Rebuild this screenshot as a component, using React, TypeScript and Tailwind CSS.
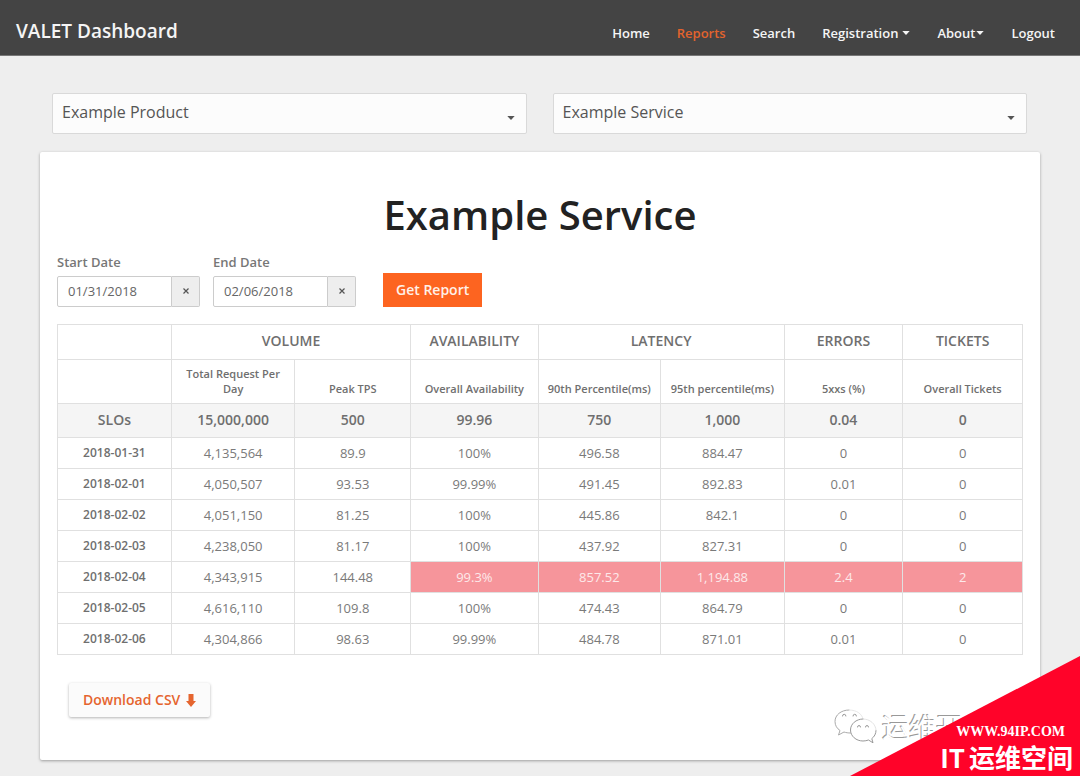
import { useState } from "react";

type NavItem = { label: string; active?: boolean; caret?: "tight" | "wide" };

type ReportRow = {
  date: string;
  values: string[];
  // index of the first value that misses its SLO
  missFrom?: number;
};

const NAV: NavItem[] = [
  { label: "Home" },
  { label: "Reports", active: true },
  { label: "Search" },
  { label: "Registration", caret: "wide" },
  { label: "About", caret: "tight" },
  { label: "Logout" },
];

const GROUPS = [
  { label: "VOLUME", span: 2 },
  { label: "AVAILABILITY", span: 1 },
  { label: "LATENCY", span: 2 },
  { label: "ERRORS", span: 1 },
  { label: "TICKETS", span: 1 },
];

const COLUMNS = [
  "Total Request Per Day",
  "Peak TPS",
  "Overall Availability",
  "90th Percentile(ms)",
  "95th percentile(ms)",
  "5xxs (%)",
  "Overall Tickets",
];

const SLOS = ["15,000,000", "500", "99.96", "750", "1,000", "0.04", "0"];

const ROWS: ReportRow[] = [
  { date: "2018-01-31", values: ["4,135,564", "89.9", "100%", "496.58", "884.47", "0", "0"] },
  { date: "2018-02-01", values: ["4,050,507", "93.53", "99.99%", "491.45", "892.83", "0.01", "0"] },
  { date: "2018-02-02", values: ["4,051,150", "81.25", "100%", "445.86", "842.1", "0", "0"] },
  { date: "2018-02-03", values: ["4,238,050", "81.17", "100%", "437.92", "827.31", "0", "0"] },
  { date: "2018-02-04", values: ["4,343,915", "144.48", "99.3%", "857.52", "1,194.88", "2.4", "2"], missFrom: 2 },
  { date: "2018-02-05", values: ["4,616,110", "109.8", "100%", "474.43", "864.79", "0", "0"] },
  { date: "2018-02-06", values: ["4,304,866", "98.63", "99.99%", "484.78", "871.01", "0.01", "0"] },
];

function Caret({ className }: { className?: string }) {
  return (
    <svg viewBox="0 0 8 4" className={`w-2 h-1 ${className ?? ""}`} fill="currentColor" aria-hidden="true">
      <path d="M.3 0h7.400L4 4z" />
    </svg>
  );
}

function Picker({ label, option }: { label: string; option: string }) {
  return (
    <div className="relative">
      <select
        aria-label={label}
        className="appearance-none block w-full h-[41px] px-[9px] pb-1 rounded-[2px] border border-[#d9d9d9] bg-[#fcfcfc] text-base text-[#555] focus:outline-none"
      >
        <option>{option}</option>
      </select>
      <Caret className="absolute right-3 top-[23px] text-[#555] pointer-events-none" />
    </div>
  );
}

function DateField({ id, label, initial }: { id: string; label: string; initial: string }) {
  const [value, setValue] = useState(initial);

  return (
    <div>
      <label htmlFor={id} className="block text-[13px] leading-5 font-semibold text-[#777]">{label}</label>
      <div className="flex mt-1 h-[31px]">
        <input
          id={id}
          type="text"
          value={value}
          onChange={(e) => setValue(e.target.value)}
          className="w-[115px] px-[10px] border border-[#ccc] rounded-l-[2px] bg-white text-[13px] text-[#666] focus:outline-none"
        />
        <button
          type="button"
          aria-label={`Clear ${label}`}
          onClick={() => setValue("")}
          className="w-7 pb-[2px] flex items-center justify-center border border-l-0 border-[#ccc] rounded-r-[2px] bg-[#eee] text-[#555]"
        >
          <svg viewBox="0 0 6 6" className="size-[6px]" fill="none" stroke="currentColor" strokeWidth="1.2" aria-hidden="true">
            <path d="M.5.5l5 5M5.500.5l-5 5" />
          </svg>
        </button>
      </div>
    </div>
  );
}

function ReportTable() {
  return (
    <table className="w-full mt-[17px] table-fixed border-collapse text-center text-[#6f6f6f] [&_td]:border [&_th]:border [&_td]:border-[#e0e0e0] [&_th]:border-[#e0e0e0]">
      <colgroup>
        <col className="w-[11.8%]" />
        <col className="w-[12.8%]" />
        <col className="w-[12%]" />
        <col className="w-[13.2%]" />
        <col className="w-[12.7%]" />
        <col className="w-[12.8%]" />
        <col className="w-[12.3%]" />
        <col className="w-[12.4%]" />
      </colgroup>
      <thead>
        <tr className="h-[35px] text-sm">
          <td />
          {GROUPS.map((g) => (
            <th key={g.label} colSpan={g.span} scope="colgroup" className="pb-[2px] font-semibold">{g.label}</th>
          ))}
        </tr>
        <tr className="h-11 text-[11px] leading-[15px]">
          <td />
          {COLUMNS.map((c) => (
            <th key={c} scope="col" className="px-2 pb-[7px] align-bottom font-semibold last:px-1 [&:nth-child(n+4)]:px-1">
              {c}
            </th>
          ))}
        </tr>
      </thead>
      <tbody>
        <tr className="h-[34px] bg-[#f5f5f5] text-sm">
          <th scope="row" className="pb-[2px] font-semibold">SLOs</th>
          {SLOS.map((v, i) => (
            <td key={i} className="pb-[2px] font-semibold">{v}</td>
          ))}
        </tr>
        {ROWS.map((row) => (
          <tr key={row.date} className="h-[31px] text-[13px] leading-5">
            <th scope="row" className="text-xs font-semibold">{row.date}</th>
            {row.values.map((v, i) => (
              <td
                key={i}
                className={row.missFrom !== undefined && i >= row.missFrom ? "bg-[#f6959b] text-[#fde9ea]" : "text-[#7a7a7a]"}
              >
                {v}
              </td>
            ))}
          </tr>
        ))}
      </tbody>
    </table>
  );
}

function ChatLogo() {
  return (
    <svg viewBox="0 0 44 36" className="w-11 h-9" fill="none" strokeLinecap="round" strokeLinejoin="round" aria-hidden="true">
      <path
        d="M15 1C7 1 1 6 1 12.500c0 4 2 7 5 9L4.500 26l5.500-3c2 .7 4 1 6.500 1"
        stroke="#aaa"
        strokeWidth="1"
      />
      <path d="M15 1c8 0 13 4 14 9" stroke="#e2e2e2" strokeWidth=".8" />
      <path
        d="M29 10c-7 0-12.500 5-12.500 11S22 32 29 32c2 0 3.700-.4 5.500-1l4.500 2.800-1.200-4.200c2.700-2 4.200-5 4.200-8.100"
        fill="#fff"
        stroke="#999"
        strokeWidth="1"
      />
      <path d="M42 21.500C42 15 36 10 29 10" stroke="#ddd" strokeWidth=".8" />
      <path
        d="M8.500 7a1.700 1.700 0 0 1 3.400 0M19 7a1.700 1.700 0 0 1 3.400 0M23.500 18a1.500 1.500 0 0 1 3 0M31.500 18a1.500 1.500 0 0 1 3 0"
        stroke="#999"
        strokeWidth="1"
      />
    </svg>
  );
}

function CornerStamp() {
  return (
    <div className="absolute right-0 bottom-0 w-[246px] h-[120px] pointer-events-none">
      <div className="absolute left-0 bottom-[31px] flex items-center gap-1">
        <ChatLogo />
        <span className="text-[27px] leading-9 text-white whitespace-nowrap font-['Noto_Sans_CJK_SC',sans-serif] [text-shadow:-1px_-1px_0_#999]">
          运维开
        </span>
      </div>
      <div className="absolute right-0 bottom-0 w-[230px] h-full bg-[#ff0329] [clip-path:polygon(100%_0,100%_100%,0_100%)]" />
      <div className="absolute right-[7px] bottom-0 flex flex-col items-end text-white font-bold whitespace-nowrap">
        <div className="pr-2 text-sm leading-3 font-['Liberation_Serif',serif]">WWW.94IP.COM</div>
        <div className="flex gap-1 text-[26px] leading-[38px] font-['Noto_Sans_CJK_SC',sans-serif]">
          <span>IT</span>
          <span>运维空间</span>
        </div>
      </div>
    </div>
  );
}

export default function App() {
  return (
    <div className="relative min-h-screen pb-4 bg-[#eee] font-['Open_Sans',sans-serif]">
      <header className="flex items-center justify-between h-14 pl-4 pr-[25px] bg-[#444] border-b border-[#777]">
        <h1 className="mt-[6px] text-[19px] leading-7 font-semibold text-[#f5f5f5]">VALET Dashboard</h1>
        <nav className="flex gap-[27px] mt-[10px] text-[13px] leading-5 font-semibold">
          {NAV.map((item) => (
            <a
              key={item.label}
              href="#"
              className={`flex items-center ${item.caret === "wide" ? "gap-1" : "gap-px"} ${item.active ? "text-[#e2632d]" : "text-[#f5f5f5]"}`}
            >
              {item.label}
              {item.caret && <Caret />}
            </a>
          ))}
        </nav>
      </header>

      <main className="px-10 pt-[37px]">
        <div className="grid grid-cols-2 gap-[26px] pl-3 pr-[13px]">
          <Picker label="Product" option="Example Product" />
          <Picker label="Service" option="Example Service" />
        </div>

        <section className="mt-[18px] px-[17px] pt-[35px] pb-[43px] bg-white rounded-[2px] shadow-[0_1px_3px_rgba(0,0,0,0.35)]">
          <h2 className="text-center text-[40px] leading-[56px] font-semibold text-[#222]">Example Service</h2>

          <form className="flex items-end mt-[9px]" onSubmit={(e) => e.preventDefault()}>
            <DateField id="start-date" label="Start Date" initial="01/31/2018" />
            <div className="ml-[13px]">
              <DateField id="end-date" label="End Date" initial="02/06/2018" />
            </div>
            <button type="submit" className="ml-[27px] h-[34px] px-[13px] bg-[#fd6420] text-sm font-semibold text-[#fff1e9]">
              Get Report
            </button>
          </form>

          <ReportTable />

          <button
            type="button"
            className="flex items-center gap-[6px] mt-7 ml-3 h-[34px] px-[14px] rounded-[2px] bg-[#fbfbfb] text-sm font-semibold text-[#e5652f] shadow-[0_1px_3px_rgba(0,0,0,0.3)]"
          >
            Download CSV
            <svg viewBox="0 0 10 13" className="w-[10px] h-[13px]" fill="currentColor" aria-hidden="true">
              <path d="M2.500 0h5v7H10l-5 6-5-6h2.500z" />
            </svg>
          </button>
        </section>
      </main>

      <CornerStamp />
    </div>
  );
}
